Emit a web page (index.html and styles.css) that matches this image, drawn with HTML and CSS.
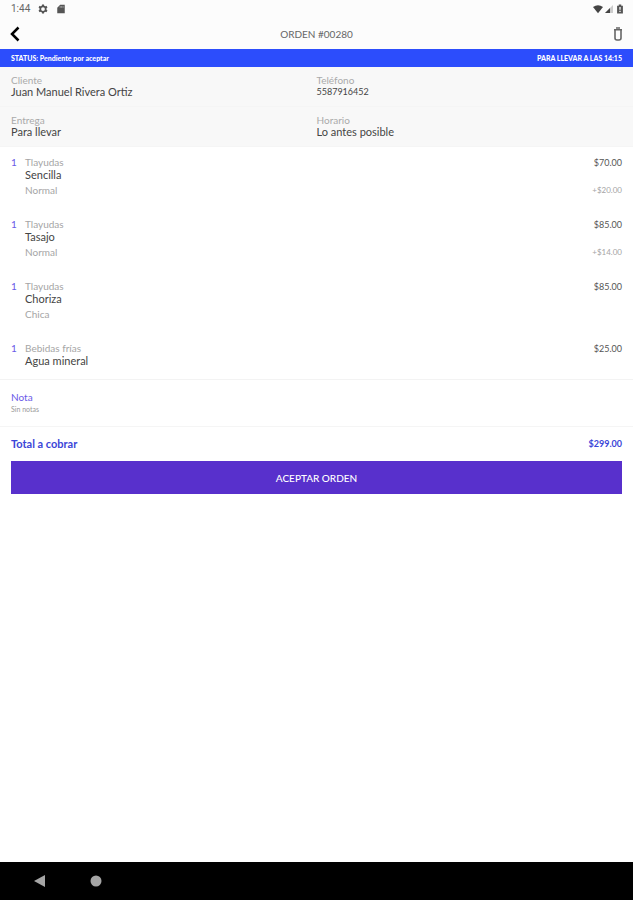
FILE: index.html
```html
<!DOCTYPE html>
<html lang="es">
<head>
<meta charset="utf-8">
<meta name="viewport" content="width=device-width, initial-scale=1">
<title>Orden #00280</title>
<link rel="stylesheet" href="styles.css">
</head>
<body>
<div class="system">
  <div class="system-group">
    <time>1:44</time>
    <svg class="icon-sm" viewBox="0 0 24 24" aria-hidden="true"><circle cx="12" cy="12" r="6.5" fill="none" stroke="#555" stroke-width="4"/><path d="M12 1v4M12 19v4M2.500 6.500l3.500 2M18 15.500l3.500 2M2.500 17.500l3.500-2M18 8.500l3.500-2" stroke="#555" stroke-width="5"/></svg>
    <svg class="icon-sm" viewBox="0 0 24 24" aria-hidden="true"><path d="M10 2h11v20H3V9z" fill="#555"/><path d="M10 5v4M13.500 5v4M17 5v4" stroke="#ccc" stroke-width="1.500"/></svg>
  </div>
  <div class="system-group system-right">
    <svg class="icon-sm" viewBox="0 0 24 24" aria-hidden="true"><path d="M0 7Q12-1 24 7L12 22z" fill="#444"/></svg>
    <svg class="icon-xs" viewBox="0 0 24 24" aria-hidden="true"><path d="M0 24L24 0v24z" fill="#ccc"/><path d="M0 24L15 9v15z" fill="#444"/></svg>
    <svg class="icon-sm" viewBox="0 0 24 24" aria-hidden="true"><path d="M9 1h6v3h4v19H5V4h4z" fill="#555"/><path d="M12 7v7M12 16v3" stroke="#fff" stroke-width="3"/></svg>
  </div>
</div>
<header class="header">
  <button class="icon-button" type="button" aria-label="Volver"><svg class="back" viewBox="0 0 10 16" aria-hidden="true"><path d="M8.500 1.500L2 8l6.500 6.500" fill="none" stroke="#000" stroke-width="2.500"/></svg></button>
  <h1>ORDEN #00280</h1>
  <button class="icon-button end" type="button" aria-label="Eliminar"><svg class="trash" viewBox="0 0 10 14" aria-hidden="true"><path d="M3 1h4M1 2.700h8" stroke="#666" stroke-width="1.400"/><path d="M2 3v8q0 2 2 2h2q2 0 2-2V3" fill="none" stroke="#666" stroke-width="1.600"/></svg></button>
</header>
<div class="status"><span>STATUS: Pendiente por aceptar</span><span>PARA LLEVAR A LAS 14:15</span></div>
<main>
  <dl class="info">
    <div><dt>Cliente</dt><dd>Juan Manuel Rivera Ortiz</dd></div>
    <div><dt>Teléfono</dt><dd class="phone">5587916452</dd></div>
    <div><dt>Entrega</dt><dd>Para llevar</dd></div>
    <div><dt>Horario</dt><dd>Lo antes posible</dd></div>
  </dl>
  <ul class="items">
    <li><span class="qty">1</span><div class="product"><p class="category">Tlayudas</p><p class="name">Sencilla</p><p class="option">Normal</p></div><div class="prices"><p class="price">$70.00</p><p class="extra">+$20.00</p></div></li>
    <li><span class="qty">1</span><div class="product"><p class="category">Tlayudas</p><p class="name">Tasajo</p><p class="option">Normal</p></div><div class="prices"><p class="price">$85.00</p><p class="extra">+$14.00</p></div></li>
    <li><span class="qty">1</span><div class="product"><p class="category">Tlayudas</p><p class="name">Choriza</p><p class="option">Chica</p></div><div class="prices"><p class="price">$85.00</p></div></li>
    <li><span class="qty">1</span><div class="product"><p class="category">Bebidas frías</p><p class="name">Agua mineral</p></div><div class="prices"><p class="price">$25.00</p></div></li>
  </ul>
  <section class="note"><h2>Nota</h2><p>Sin notas</p></section>
  <div class="total"><span>Total a cobrar</span><span class="amount">$299.00</span></div>
  <button class="accept" type="button">ACEPTAR ORDEN</button>
</main>
<nav class="nav" aria-label="Sistema">
  <button type="button" aria-label="Atrás"><svg viewBox="0 0 12 12" aria-hidden="true"><path d="M12 0v12L1 6z" fill="#a5a5a5"/></svg></button>
  <button type="button" aria-label="Inicio"><svg viewBox="0 0 12 12" aria-hidden="true"><circle cx="6" cy="6" r="5.500" fill="#a5a5a5"/></svg></button>
</nav>
</body>
</html>
```
FILE: styles.css
```css
* { box-sizing: border-box; }
body {
  margin: 0;
  min-height: 100vh;
  display: flex;
  flex-direction: column;
  background: #fff;
  color: #444;
  font: 10px/12px Lato, "Open Sans", sans-serif;
}
h1, h2, p, dl, dd, ul { margin: 0; padding: 0; font-weight: 400; }
ul { list-style: none; }
button { border: 0; padding: 0; background: none; font: inherit; }
svg { display: block; }

.system {
  display: flex;
  justify-content: space-between;
  align-items: center;
  height: 18px;
  padding: 0 8px 0 11px;
  background: #fcfcfc;
  color: #666;
  font-family: Roboto, sans-serif;
}
.system-group { display: flex; align-items: center; gap: 8px; }
.system-right { gap: 2px; }
.icon-sm { width: 10px; height: 10px; }
.icon-xs { width: 8px; height: 8px; }

.header {
  display: grid;
  grid-template-columns: 24px 1fr 24px;
  align-items: center;
  height: 31px;
  padding: 0 10px;
  background: #fcfcfc;
}
.header h1 { font-size: 10px; text-align: center; color: #666; }
.icon-button { display: flex; }
.end { justify-content: flex-end; }
.back { width: 10px; height: 16px; }
.trash { width: 10px; height: 14px; }

.status {
  display: flex;
  justify-content: space-between;
  padding: 3px 11px;
  background: #2c4dfc;
  color: #fff;
  font-size: 7px;
  font-weight: 900;
}

.info {
  display: grid;
  grid-template-columns: 1fr 1fr;
  background: #f8f8f8;
}
.info > div { padding: 7px 0 8px 11px; border-bottom: 1px solid #f5f5f5; }
.info > div:nth-child(even) { padding-left: 0; }
.info dt { color: #aaa; }
.info dd { font-size: 11px; }
.info .phone { font-size: 9px; }

.items li { display: flex; padding: 9px 11px 11px; }
.qty { width: 14px; color: #6a5ae8; }
.product { flex: 1; }
.prices { text-align: right; }
.category, .option, .extra { color: #a5a5a5; }
.category, .option { font-size: 10px; }
.name { font-size: 11px; line-height: 14px; }
.option { line-height: 16px; }
.price { line-height: 14px; font-size: 9px; color: #555; }
.extra { margin-top: 12px; line-height: 16px; font-size: 8px; }

.note {
  padding: 11px;
  border-top: 1px solid #f3f3f3;
  border-bottom: 1px solid #f5f5f5;
}
.note h2 { font-size: 10px; color: #6a5ae8; }
.note p { font-size: 7px; color: #999; }

.total {
  display: flex;
  justify-content: space-between;
  padding: 11px;
  color: #3b45d8;
  font-size: 11px;
  font-weight: 700;
}
.amount { font-size: 9px; }
.accept {
  display: block;
  width: calc(100% - 22px);
  height: 33px;
  margin: 0 11px;
  background: #5830cc;
  color: #fff;
  font-weight: 500;
}
.nav {
  display: flex;
  align-items: center;
  gap: 45px;
  height: 38px;
  margin-top: auto;
  padding: 0 33px;
  background: #000;
}
.nav svg { width: 12px; height: 12px; }
```
